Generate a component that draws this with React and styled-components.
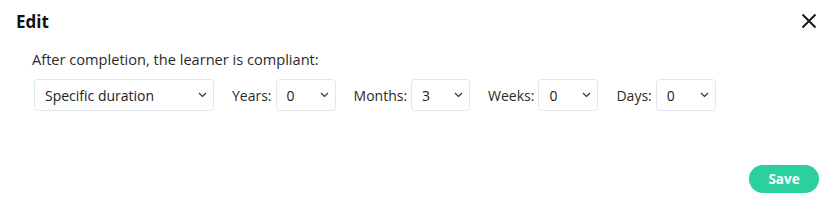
import React from 'react';
import styled, { createGlobalStyle } from 'styled-components';

const GlobalStyle = createGlobalStyle`
  html, body {
    margin: 0;
    padding: 0;
    background: #fff;
  }
  body {
    font-family: 'Open Sans', 'Noto Sans', sans-serif;
    color: #222;
  }
`;

const Modal = styled.div`
  width: 834px;
  height: 210px;
  box-sizing: border-box;
  display: flex;
  flex-direction: column;
  padding: 10px 15px 17px 16px;
`;

const Header = styled.div`
  display: flex;
  align-items: center;
  justify-content: space-between;
  height: 22px;
`;

const Title = styled.h2`
  margin: 0;
  font-size: 17px;
  font-weight: 700;
  color: #111;
`;

const CloseButton = styled.button`
  border: none;
  background: none;
  padding: 0;
  width: 20px;
  height: 20px;
  display: flex;
  align-items: center;
  justify-content: center;
  cursor: pointer;
`;

const Body = styled.div`
  flex: 1;
  padding: 17px 0 0 16px;
`;

const Question = styled.p`
  margin: 0 0 10px;
  font-size: 14.6px;
  line-height: 20px;
  color: #2a2a2a;
`;

const Row = styled.div`
  display: flex;
  align-items: center;
  padding-left: 2px;
`;

const Field = styled.label`
  display: flex;
  align-items: center;
  gap: 4px;
  margin-left: ${(p) => (p.$first ? '0' : '18px')};
  font-size: 14px;
  color: #2a2a2a;
`;

const SelectWrap = styled.div`
  position: relative;
  width: ${(p) => p.$width}px;
  height: 32px;
`;

const Select = styled.select`
  appearance: none;
  width: 100%;
  height: 100%;
  box-sizing: border-box;
  border: 1px solid #e3e5ec;
  border-radius: 4px;
  background: #fff;
  padding: 0 24px 0 10px;
  font-family: inherit;
  font-size: 14px;
  color: #222;
  outline: none;
`;

const Chevron = styled.svg`
  position: absolute;
  right: 7px;
  top: 13px;
  pointer-events: none;
`;

const Footer = styled.div`
  display: flex;
  justify-content: flex-end;
`;

const SaveButton = styled.button`
  width: 70px;
  height: 28px;
  border: none;
  border-radius: 14px;
  background: #2ccf9e;
  color: #fff;
  font-family: inherit;
  font-size: 13.5px;
  font-weight: 700;
  cursor: pointer;
`;

const Dropdown = ({ width, value, options }) => (
  <SelectWrap $width={width}>
    <Select defaultValue={value}>
      {options.map((o) => (
        <option key={o}>{o}</option>
      ))}
    </Select>
    <Chevron width="9" height="6" viewBox="0 0 9 6">
      <path d="M1 1l3.5 3.5L8 1" fill="none" stroke="#333" strokeWidth="1.2" />
    </Chevron>
  </SelectWrap>
);

const nums = Array.from({ length: 13 }, (_, i) => String(i));

export default function App() {
  return (
    <>
      <GlobalStyle />
      <Modal>
        <Header>
          <Title>Edit</Title>
          <CloseButton aria-label="Close">
            <svg width="16" height="16" viewBox="0 0 16 16">
              <path d="M1.5 1.5l13 13M14.5 1.5l-13 13" stroke="#111" strokeWidth="1.8" />
            </svg>
          </CloseButton>
        </Header>
        <Body>
          <Question>After completion, the learner is compliant:</Question>
          <Row>
            <Field $first>
              <Dropdown width={180} value="Specific duration" options={['Specific duration', 'Never', 'Forever']} />
            </Field>
            <Field>
              Years:
              <Dropdown width={60} value="0" options={nums} />
            </Field>
            <Field>
              Months:
              <Dropdown width={59} value="3" options={nums} />
            </Field>
            <Field>
              Weeks:
              <Dropdown width={60} value="0" options={nums} />
            </Field>
            <Field>
              Days:
              <Dropdown width={60} value="0" options={nums} />
            </Field>
          </Row>
        </Body>
        <Footer>
          <SaveButton>Save</SaveButton>
        </Footer>
      </Modal>
    </>
  );
}
